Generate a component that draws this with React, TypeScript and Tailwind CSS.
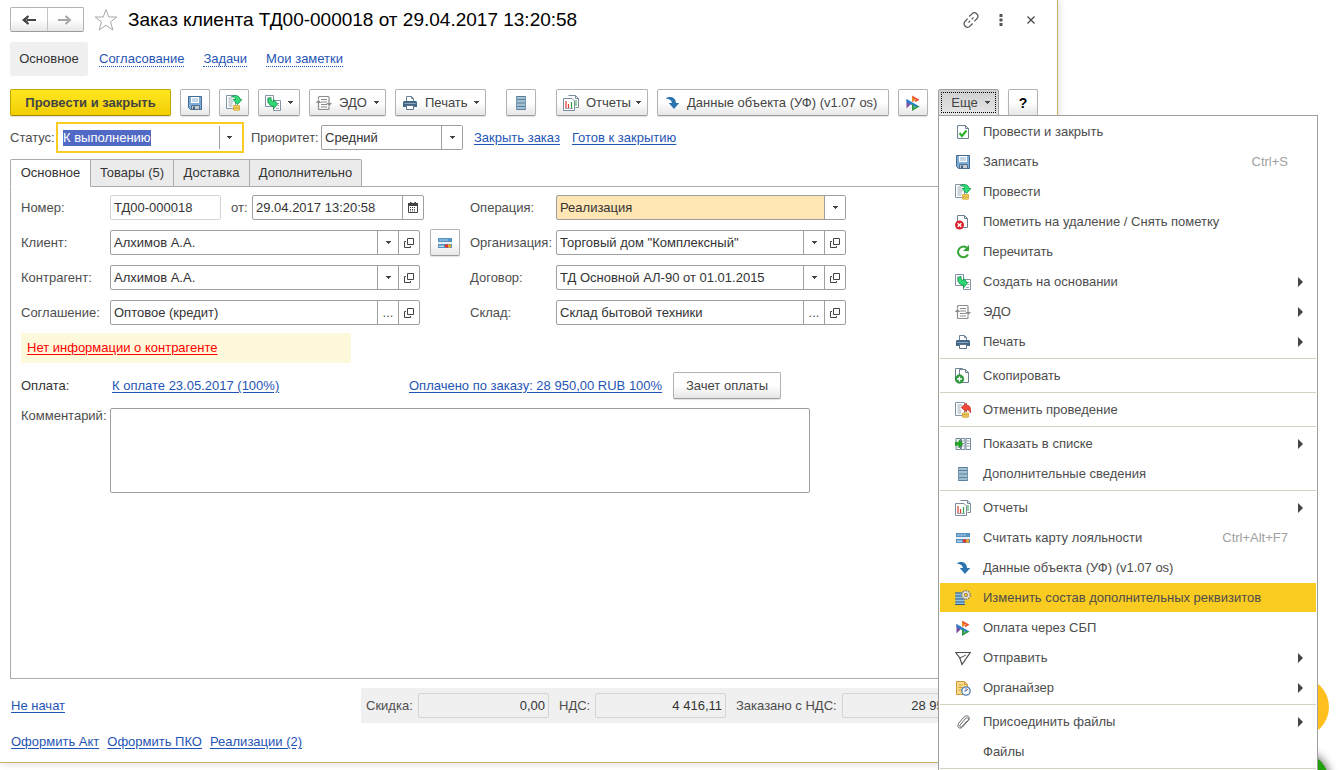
import { useEffect, useRef } from 'react';
import type { ReactNode } from 'react';
import clsx from 'clsx';

/* ---------- Icons ---------- */

type IconProps = { className?: string };

function Svg({ children, className = 'size-4', box = '0 0 16 16' }: { children: ReactNode; className?: string; box?: string }) {
    return (
        <svg viewBox={box} className={clsx('shrink-0', className)} fill="none" aria-hidden="true">
            {children}
        </svg>
    );
}

const Caret = () => (
    <Svg box="0 0 5 3" className="w-[5px] h-[3px]">
        <path d="M0 0h5v1H0zM1 1h3v1H1zM2 2h1v1H2z" fill="#444" />
    </Svg>
);

const OpenIcon = () => (
    <Svg box="0 0 10 10" className="size-[10px]">
        <path d="M3.500.5h6v6h-6zM2 3.500H.5v6h6V8" stroke="#444" />
    </Svg>
);

const CalendarIcon = () => (
    <Svg box="0 0 10 11" className="w-[10px] h-[11px]">
        <path d="M.5 2.500h9v8h-9z" stroke="#444" />
        <path d="M0 1h10v3H0zM2 0h1.500v2H2zM6.500 0H8v2H6.500z" fill="#444" />
        <path d="M2 5.500h6M2 7.500h6M2 9h6" stroke="#444" strokeDasharray="1 1" />
    </Svg>
);

const SaveIcon = () => (
    <Svg>
        <path d="M1.500 1.500h13v13h-11l-2-2z" fill="#7fadd9" stroke="#42698f" />
        <path d="M4 2h8v6H4z" fill="#fff" />
        <path d="M5 4h6M5 6h6" stroke="#8fb0d0" />
        <path d="M4.500 10.500h8v4h-8z" fill="#c9cdd2" stroke="#54708f" />
        <path d="M6 11.500h2v3H6z" fill="#40607f" />
    </Svg>
);

const PostIcon = () => (
    <Svg>
        <path d="M.5.5h9v13h-9z" fill="#fff" stroke="#8295a6" />
        <path d="M2.500 3h4M2.500 5h4M2.500 7h5M2.500 9h4M2.500 11h4" stroke="#9aa8b5" />
        <path d="M5.500 1.500C8.500-.5 14 .5 14 4.500h2L11.500 9.500 7 4.500h2.500C9.500 2.700 8 2 5.500 1.500z" fill="#2fdc78" stroke="#16924a" strokeWidth=".8" />
        <path d="M7.500 10.500h6V15c0 .6-6 .6-6 0z" fill="#f9df78" stroke="#d5a42e" strokeWidth=".8" />
        <path d="M7.500 12.200h6M7.500 13.800h6" stroke="#d09c2c" strokeWidth=".8" />
    </Svg>
);

const UnpostIcon = () => (
    <Svg>
        <path d="M.5.5h9v13h-9z" fill="#fff" stroke="#8295a6" />
        <path d="M2.500 3h5M2.500 5h3M2.500 7h3M2.500 9h4M2.500 11h4" stroke="#9aa8b5" />
        <path d="M6.200 5.500L11.500 1v2.200c3.500 0 4.600 2.500 4 7.800-1-2.500-2-3.300-4-3.300V10z" fill="#ee4a3c" stroke="#b92a20" strokeWidth=".7" />
        <path d="M7.500 11h6v4c0 .6-6 .6-6 0z" fill="#f9df78" stroke="#d5a42e" strokeWidth=".8" />
        <path d="M7.500 12.500h6M7.500 14h6" stroke="#d09c2c" strokeWidth=".8" />
    </Svg>
);

const CreateFromIcon = () => (
    <Svg>
        <path d="M.5.5h8v11h-8z" fill="#fff" stroke="#8295a6" />
        <path d="M2 3h2M2 5h1.500M2 7h1.500" stroke="#9aa8b5" />
        <path d="M8.500 5.500h7v10h-7z" fill="#fff" stroke="#8295a6" />
        <path d="M12 8.500h2M12.500 10.500h1.500M11 13.500h3" stroke="#9aa8b5" />
        <path d="M3 3.500l3-1.200c-.2 2.500.5 4 2.500 4.200V4.200L12.500 9l-4 5v-2.800C4.800 11 2.500 8.500 3 3.500z" fill="#2fd874" stroke="#16924a" strokeWidth=".8" />
    </Svg>
);

const EdoIcon = () => (
    <Svg>
        <path d="M2.500 4.500v-2c0-.6.400-1 1-1H12c.6 0 1 .4 1 1V8M13 11.500v2c0 .6-.4 1-1 1H3.500c-.6 0-1-.4-1-1V8" stroke="#8c8c8c" strokeWidth="1.200" />
        <path d="M5 4.500h6M5 7h6M5 9.500h6M5 12h6" stroke="#8c8c8c" />
        <path d="M-.3 8l2.800-3.200L5.300 8zM10.300 8h5.700l-2.900 3.200z" fill="#8c8c8c" />
    </Svg>
);

const PrintIcon = () => (
    <Svg>
        <path d="M4.500 6V1.500h5l2 2V6" fill="#fff" stroke="#6c8299" />
        <path d="M9.500 1.500v2h2" stroke="#6c8299" />
        <path d="M1 7.500C1 6.600 1.700 6 2.500 6h11c.8 0 1.500.6 1.500 1.500V12H1z" fill="#426788" />
        <path d="M2.500 8.500h11" stroke="#90aac2" />
        <path d="M4.500 10.500h7v4h-7z" fill="#fff" stroke="#5a748d" />
    </Svg>
);

const ListIcon = () => (
    <Svg>
        <path d="M3 1h10v14H3z" fill="#a3c0d2" />
        <path d="M3 1.500h10M3 4.500h10M3 8h10M3 11.500h10M3 14.500h10" stroke="#5d819c" />
        <path d="M3.500 1v14M12.500 1v14" stroke="#7395ad" />
    </Svg>
);

const ReportIcon = () => (
    <Svg>
        <path d="M5.500.5h7l3 3v9h-3" fill="#fff" stroke="#7c8c9c" />
        <path d="M12.500.5v3h3" stroke="#7c8c9c" />
        <path d="M13 5v6" stroke="#2fa34c" />
        <path d="M.5 3.500h8.500l2.500 2.500v9.500H.5z" fill="#fff" stroke="#7c8c9c" />
        <path d="M3 6v7M5.500 9v4" stroke="#e23b30" strokeWidth="1.200" />
        <path d="M8.500 7v6" stroke="#2fa34c" strokeWidth="1.200" />
        <path d="M2 13.500h8" stroke="#9aa8b5" />
    </Svg>
);

const ObjectDataIcon = () => (
    <Svg>
        <path d="M1.500 3.500C4.500.8 12 1.300 12 8h3.200L10 14 4.800 8h3C7.800 5.300 5.500 4 1.500 3.500z" fill="#2b74b0" />
    </Svg>
);

const SbpIcon = () => (
    <Svg>
        <path d="M1.500 4v9.500L6.500 8.500z" fill="#7b4fa0" />
        <path d="M1.500 4l13 7.500-3 1.200L1.500 7z" fill="#2b7fc9" />
        <path d="M7 .5v6.800l3-1.800V4.300z" fill="#f0882c" />
        <path d="M7 .5l7.500 4.200L10 7.300V5.500l1-.8-3-1.700z" fill="#e8502c" />
        <path d="M7 9.200V16l7.500-4.500-3-.5L9 12.800V10z" fill="#2c9a46" />
    </Svg>
);

const CardIcon = () => (
    <Svg>
        <path d="M1 3h14v10H1z" fill="#5794c6" />
        <path d="M2.500 5h9" stroke="#d7e8f5" strokeDasharray="2 1" />
        <path d="M1 7h14v2H1z" fill="#e9eef2" />
        <path d="M2 11.200h5" stroke="#e9eef2" />
        <path d="M8 9.500h3v3H8z" fill="#e5322d" />
        <path d="M11 9.500h3v3h-3z" fill="#f5a623" />
    </Svg>
);

const CheckDocIcon = () => (
    <Svg>
        <path d="M2.500 1.500h8l3 3v10h-11z" fill="#fff" stroke="#6f8294" />
        <path d="M10.500 1.500v3h3" stroke="#6f8294" />
        <path d="M4.500 9l2.500 3 4.500-5.500" stroke="#2cb52c" strokeWidth="2.200" />
    </Svg>
);

const DeleteMarkIcon = () => (
    <Svg>
        <path d="M2.500 1.500h7l3 3v9h-10z" fill="#fff" stroke="#6f8294" />
        <path d="M9.500 1.500v3h3" stroke="#6f8294" />
        <circle cx="4.500" cy="11" r="4.500" fill="#d9232e" />
        <path d="M2.700 9.200l3.600 3.600M6.300 9.200l-3.600 3.600" stroke="#fff" strokeWidth="1.400" />
    </Svg>
);

const RereadIcon = () => (
    <Svg>
        <path d="M13 10.500A5.300 5.300 0 1 1 11.500 3.600" stroke="#35a435" strokeWidth="2" />
        <path d="M14 1v6H8z" fill="#35a435" />
    </Svg>
);

const CopyDocIcon = () => (
    <Svg>
        <path d="M.5 12V.5h7l2 2" stroke="#6f8294" />
        <path d="M4.500 1.500h6l3 3v10h-9z" fill="#fff" stroke="#6f8294" />
        <path d="M10.500 1.500v3h3" stroke="#6f8294" />
        <circle cx="4.500" cy="11" r="4.300" fill="#2f9e3f" stroke="#1f7a2d" strokeWidth=".6" />
        <path d="M4.500 8.500v5M2 11h5" stroke="#fff" strokeWidth="1.300" />
    </Svg>
);

const ShowInListIcon = () => (
    <Svg>
        <path d="M.5 1.500h15v13H.5z" fill="#fff" />
        <path d="M1 2.500h4.500v11H1zM6.500 2.500h3.500v11H6.500zM11 2.500h4.500v11H11z" stroke="#74889b" />
        <path d="M7 5h2.500M7 7.500h2.500M7 10h2.500M12 5h2.500M12 7.500h2.500M12 10h2.500M2 11h3" stroke="#8b9cab" />
        <path d="M0 6.200h4V3.700l4 4-4 4V9.200H0z" fill="#1faa1f" stroke="#0d750d" strokeWidth=".5" />
    </Svg>
);

const EditPropsIcon = () => (
    <Svg>
        <path d="M.5 2.500h9v12h-9z" fill="#8fc3e6" />
        <path d="M0 3h9M0 6h9M0 9h10M0 12h10M0 14.500h10" stroke="#2e5878" />
        <circle cx="11" cy="5" r="4.300" fill="#e8e2d2" stroke="#8b8576" strokeDasharray="1.700 1" strokeWidth="1.400" />
        <circle cx="11" cy="5" r="1.700" fill="#facc20" stroke="#8b8576" />
    </Svg>
);

const SendIcon = () => (
    <Svg>
        <path d="M.8 2.500h14.400L7 14.500 4.800 8z" stroke="#4d4d4d" strokeWidth="1.200" />
        <path d="M4.800 8l6-2.800" stroke="#4d4d4d" />
    </Svg>
);

const OrganizerIcon = () => (
    <Svg>
        <path d="M1.500 1.500h8l3 3v10h-11z" fill="#fbdc8c" stroke="#d09a3c" />
        <path d="M9.500 1.500v3h3M3.500 5h4M3.500 7.500h4M3.500 10h3" stroke="#d09a3c" />
        <circle cx="11" cy="11" r="4.200" fill="#f4f9fd" stroke="#4d7fb0" strokeWidth="1.300" />
        <path d="M11 11l1.800-1.800" stroke="#d0342c" />
        <path d="M11 8v3H9.500" stroke="#4d7fb0" />
    </Svg>
);

const ClipIcon = ({ className }: IconProps) => (
    <Svg className={className}>
        <path
            d="M12.500 6.500l-5.300 5.800c-1.300 1.400-3.200.2-2.200-1.300L10.500 4.600c1.700-1.800 4.200 0 2.700 2M3.500 9.300L9.200 3c2.600-2.700 6.800-.3 4.300 3.300l-5.800 6.500c-2.600 2.900-6.300.4-4.200-2.800z"
            stroke="#666"
        />
    </Svg>
);

const StarIcon = () => (
    <Svg box="0 0 24 24" className="size-6">
        <path d="M12 1.500l2.800 7.500h8l-6.300 5 2.400 8-6.900-4.700L5.100 22l2.400-8L1.200 9h8z" stroke="#a8a8a8" />
    </Svg>
);

const LinkIcon = () => (
    <Svg>
        <path d="M6.300 4.500l2.700-2.700c2.900-2.900 8 1.200 5 4.700L11.300 9.300M9.700 11.500L7 14.200c-3 2.900-8-1.200-5-4.700l2.700-2.800M5.500 10.500l1.700-1.700M8.700 7.300l1.800-1.800" stroke="#555" strokeWidth="1.200" />
    </Svg>
);

/* ---------- Controls ---------- */

const buttonLook =
    'flex h-[27px] shrink-0 items-center rounded-[2px] border border-[#b3b3b3] border-b-[#9c9c9c] bg-linear-to-b from-white from-50% to-[#e6e6e6] text-[#444] shadow-[0_1px_1px_#0000001f]';

type ToolButtonProps = { width: string; label?: string; title?: string; icon?: ReactNode; menu?: boolean };

function ToolButton({ width, label, title, icon, menu }: ToolButtonProps) {
    const wide = !!icon && (!!label || menu);
    return (
        <button type="button" aria-label={label ?? title} className={clsx(buttonLook, width, wide ? 'px-[6px]' : 'justify-center')}>
            {icon}
            {label && <span className={clsx(wide && 'pl-[7px]')}>{label}</span>}
            {menu && <span className="ml-auto"><Caret /></span>}
        </button>
    );
}

const link = 'text-[#1f55b5] underline underline-offset-2';

type FieldProps = {
    id: string;
    value: string;
    width?: string;
    pick?: 'list' | 'dots' | 'date';
    open?: boolean;
};

function Field({ id, value, width = 'flex-1', pick = 'list', open = true }: FieldProps) {
    const side = 'flex w-[21px] shrink-0 items-center justify-center border-l border-[#9f9f9f]';
    return (
        <div className={clsx('flex h-[25px] rounded-[2px] border border-[#9f9f9f] bg-white', width)}>
            <input id={id} defaultValue={value} className="min-w-0 flex-1 px-[3px] text-[#333] outline-none" />
            <button type="button" aria-label="Выбрать" className={side}>
                {pick === 'list' && <Caret />}
                {pick === 'dots' && '...'}
                {pick === 'date' && <CalendarIcon />}
            </button>
            {open && (
                <button type="button" aria-label="Открыть" className={side}>
                    <OpenIcon />
                </button>
            )}
        </div>
    );
}

function Select({ id, value, width, className }: { id: string; value: string; width: string; className?: string }) {
    return (
        <div className={clsx('relative h-[25px] rounded-[2px] border border-[#9f9f9f]', width, className)}>
            <select id={id} className="size-full appearance-none px-[3px] text-[#333] outline-none">
                <option>{value}</option>
            </select>
            <span className="pointer-events-none absolute inset-y-0 right-0 flex w-[21px] items-center justify-center border-l border-[#9f9f9f] bg-white">
                <Caret />
            </span>
        </div>
    );
}

function Row({ id, label, labelWidth, children }: { id: string; label: string; labelWidth: string; children: ReactNode }) {
    return (
        <div className="flex h-[25px] items-center">
            <label htmlFor={id} className={clsx('shrink-0', labelWidth)}>{label}</label>
            {children}
        </div>
    );
}

function StatusBox() {
    const ref = useRef<HTMLInputElement>(null);

    useEffect(() => {
        ref.current?.focus();
        ref.current?.select();
    }, []);

    return (
        <div className="flex h-[31px] w-[188px] items-center border-2 border-[#facb20] bg-white">
            <input
                ref={ref}
                id="status"
                defaultValue="К выполнению"
                className="min-w-0 flex-1 pl-[5px] text-[#333] outline-none selection:bg-[#4f68c4fd] selection:text-white"
            />
            <button type="button" aria-label="Выбрать статус" className="flex h-[23px] w-[23px] items-center border-l border-[#9f9f9f] pl-[7px]">
                <Caret />
            </button>
        </div>
    );
}

/* ---------- Menu ---------- */

type MenuEntry = { text: string; icon?: ReactNode; keys?: string; sub?: boolean; active?: boolean };

const menuGroups: MenuEntry[][] = [
    [
        { text: 'Провести и закрыть', icon: <CheckDocIcon /> },
        { text: 'Записать', icon: <SaveIcon />, keys: 'Ctrl+S' },
        { text: 'Провести', icon: <PostIcon /> },
        { text: 'Пометить на удаление / Снять пометку', icon: <DeleteMarkIcon /> },
        { text: 'Перечитать', icon: <RereadIcon /> },
        { text: 'Создать на основании', icon: <CreateFromIcon />, sub: true },
        { text: 'ЭДО', icon: <EdoIcon />, sub: true },
        { text: 'Печать', icon: <PrintIcon />, sub: true },
    ],
    [{ text: 'Скопировать', icon: <CopyDocIcon /> }],
    [{ text: 'Отменить проведение', icon: <UnpostIcon /> }],
    [
        { text: 'Показать в списке', icon: <ShowInListIcon />, sub: true },
        { text: 'Дополнительные сведения', icon: <ListIcon /> },
    ],
    [
        { text: 'Отчеты', icon: <ReportIcon />, sub: true },
        { text: 'Считать карту лояльности', icon: <CardIcon />, keys: 'Ctrl+Alt+F7' },
        { text: 'Данные объекта (УФ) (v1.07 os)', icon: <ObjectDataIcon /> },
        { text: 'Изменить состав дополнительных реквизитов', icon: <EditPropsIcon />, active: true },
        { text: 'Оплата через СБП', icon: <SbpIcon /> },
        { text: 'Отправить', icon: <SendIcon />, sub: true },
        { text: 'Органайзер', icon: <OrganizerIcon />, sub: true },
    ],
    [
        { text: 'Присоединить файлы', icon: <ClipIcon />, sub: true },
        { text: 'Файлы' },
    ],
];

function MoreMenu() {
    return (
        <div role="menu" className="absolute top-[26px] left-0 z-20 flex w-[380px] flex-col gap-px border border-[#9f9f9f] bg-white px-px pt-px pb-10">
            {menuGroups.map((group, g) => (
                <div key={g} className="flex flex-col gap-px">
                    {group.map(item => (
                        <button
                            key={item.text}
                            type="button"
                            role="menuitem"
                            className={clsx('flex h-[29px] items-center gap-3 pr-[13px] pl-[15px] text-left text-[#4d4d4d]', item.active && 'bg-[#facb20]')}
                        >
                            <span className="size-4 shrink-0">{item.icon}</span>
                            <span className="flex-1">{item.text}</span>
                            {item.keys && <span className="pr-[15px] text-[#a0a0a0]">{item.keys}</span>}
                            {item.sub && (
                                <Svg box="0 0 5 10" className="h-[10px] w-[5px]">
                                    <path d="M0 0l5 5-5 5z" fill="#444" />
                                </Svg>
                            )}
                        </button>
                    ))}
                    <div role="separator" className="my-px h-px bg-[#d5d0bb]" />
                </div>
            ))}
        </div>
    );
}

/* ---------- Page ---------- */

const sections = ['Согласование', 'Задачи', 'Мои заметки'];

const tabs = [
    { text: 'Основное', width: 'w-[81px]', active: true },
    { text: 'Товары (5)', width: 'w-[83px]' },
    { text: 'Доставка', width: 'w-[76px]' },
    { text: 'Дополнительно', width: 'w-[112px]' },
];

const totals = [
    { id: 'discount', label: 'Скидка:', value: '0,00', labelWidth: 'w-[52px]' },
    { id: 'vat', label: 'НДС:', value: '4 416,11', labelWidth: 'w-[36px]' },
    { id: 'ordered', label: 'Заказано с НДС:', value: '28 950,00', labelWidth: 'w-[106px]' },
];

export default function App() {
    return (
        <div className="relative flex h-screen overflow-hidden bg-white pr-[286px] pb-[7px] font-['Liberation_Sans',Arial,sans-serif] text-[13px] leading-4 text-[#4d4d4d]">
            <main className="flex min-w-0 flex-1 flex-col border-r border-b border-[#c9b564] bg-white pr-[9px] pl-[10px] shadow-[0_0_8px_#0000002e]">
                {/* Title */}
                <header className="flex items-center pt-[7px] pr-[9px]">
                    <div className="flex h-[25px] w-[74px] rounded-[2px] border border-[#b3b3b3] border-b-[#9c9c9c] bg-linear-to-b from-white from-50% to-[#e6e6e6]">
                        <button type="button" aria-label="Назад" className="flex flex-1 items-center justify-center border-r border-[#c4c4c4]">
                            <Svg box="0 0 14 10" className="h-[10px] w-[14px]">
                                <path d="M14 5H5" stroke="#444" strokeWidth="2" />
                                <path d="M0 5l6-4.500V3L4 5l2 2v2.500z" fill="#444" />
                                <path d="M6.500 1L2 5l4.500 4" stroke="#444" strokeWidth="2" />
                            </Svg>
                        </button>
                        <button type="button" aria-label="Вперед" className="flex flex-1 items-center justify-center">
                            <Svg box="0 0 14 10" className="h-[10px] w-[14px]">
                                <path d="M0 5h10M7.500 1L12 5 7.500 9" stroke="#a6a6a6" strokeWidth="2" />
                            </Svg>
                        </button>
                    </div>
                    <button type="button" aria-label="В избранное" className="mr-[10px] ml-[10px]"><StarIcon /></button>
                    <h1 className="flex-1 text-[19px] leading-6 text-black">Заказ клиента ТД00-000018 от 29.04.2017 13:20:58</h1>
                    <div className="flex items-center gap-[14px]">
                        <button type="button" aria-label="Получить ссылку"><LinkIcon /></button>
                        <button type="button" aria-label="Меню окна">
                            <Svg><path d="M6.500 2h3v3h-3zM6.500 6.500h3v3h-3zM6.500 11h3v3h-3z" fill="#555" /></Svg>
                        </button>
                        <button type="button" aria-label="Закрыть">
                            <Svg><path d="M4.500 4.500l7 7M11.500 4.500l-7 7" stroke="#444" strokeWidth="1.200" /></Svg>
                        </button>
                    </div>
                </header>

                {/* Sections */}
                <nav className="mt-[10px] flex items-center gap-[19px]">
                    <span className="-mr-2 flex h-[34px] w-[78px] items-center justify-center rounded-[3px] bg-[#f0f0f0] text-[#333]">Основное</span>
                    {sections.map(text => (
                        <a key={text} href="#" className="border-b border-dotted border-[#1f55b5] text-[#1f55b5] leading-[14px]">{text}</a>
                    ))}
                </nav>

                {/* Commands */}
                <div className="mt-[13px] flex items-center gap-[9px] pr-[10px]">
                    <button type="button" className="h-[27px] w-[161px] shrink-0 rounded-[2px] border border-[#c2a600] border-b-[#a08a00] bg-linear-to-b from-[#ffe81f] to-[#f2cd00] font-bold text-[#444] shadow-[0_1px_1px_#0000001f]">
                        Провести и закрыть
                    </button>
                    <ToolButton width="w-[30px]" title="Записать" icon={<SaveIcon />} />
                    <ToolButton width="w-[30px]" title="Провести" icon={<PostIcon />} />
                    <ToolButton width="w-[42px]" title="Создать на основании" icon={<CreateFromIcon />} menu />
                    <ToolButton width="w-[77px]" label="ЭДО" icon={<EdoIcon />} menu />
                    <ToolButton width="w-[91px]" label="Печать" icon={<PrintIcon />} menu />
                    <div className="mx-[11px] flex">
                        <ToolButton width="w-[30px]" title="Дополнительные сведения" icon={<ListIcon />} />
                    </div>
                    <ToolButton width="w-[92px]" label="Отчеты" icon={<ReportIcon />} menu />
                    <ToolButton width="w-[232px]" label="Данные объекта (УФ) (v1.07 os)" icon={<ObjectDataIcon />} />
                    <ToolButton width="w-[30px]" title="Оплата через СБП" icon={<SbpIcon />} />
                    <div className="relative ml-auto">
                        <button type="button" aria-expanded="true" className="h-[27px] w-[61px] rounded-[2px] border border-[#9f9f9f] bg-linear-to-b from-[#cfcfcf] to-[#e6e6e6] p-[2px] text-[#444]">
                            <span className="flex size-full items-center justify-center gap-[7px] border border-dotted border-black pl-1">
                                Еще <Caret />
                            </span>
                        </button>
                        <MoreMenu />
                    </div>
                    <button type="button" className={clsx(buttonLook, 'w-[30px] justify-center text-sm font-bold text-black')}>?</button>
                </div>

                {/* Status */}
                <div className="mt-[6px] flex items-center">
                    <label htmlFor="status" className="w-[46px]">Статус:</label>
                    <StatusBox />
                    <label htmlFor="priority" className="ml-[7px] w-[70px]">Приоритет:</label>
                    <Select id="priority" value="Средний" width="w-[142px]" />
                    <a href="#" className={clsx(link, 'ml-[11px]')}>Закрыть заказ</a>
                    <a href="#" className={clsx(link, 'ml-3')}>Готов к закрытию</a>
                </div>

                {/* Tabs */}
                <div role="tablist" className="mt-[6px] flex">
                    {tabs.map(tab => (
                        <button
                            key={tab.text}
                            type="button"
                            role="tab"
                            aria-selected={!!tab.active}
                            className={clsx(
                                'relative -mb-px h-[28px] border border-[#ababab] text-[#333]',
                                tab.width,
                                tab.active ? 'rounded-tl-[2px] border-b-white bg-white' : 'border-l-0 bg-[#ebebeb] last:rounded-tr-[2px]',
                            )}
                        >
                            {tab.text}
                        </button>
                    ))}
                </div>

                <section className="flex-1 border border-[#ababab] px-[10px] pt-2">
                    <div className="flex">
                        <div className="flex w-[449px] flex-col gap-[10px]">
                            <Row id="number" label="Номер:" labelWidth="w-[89px]">
                                <input id="number" readOnly value="ТД00-000018" className="h-[25px] w-[111px] rounded-[2px] border border-[#d4d4d4] px-[3px] text-[#333] outline-none" />
                                <label htmlFor="date" className="w-[31px] pl-[10px]">от:</label>
                                <Field id="date" value="29.04.2017 13:20:58" width="w-[172px]" pick="date" open={false} />
                            </Row>
                            <Row id="client" label="Клиент:" labelWidth="w-[89px]">
                                <Field id="client" value="Алхимов А.А." width="w-[310px]" />
                                <div className="ml-[10px] flex">
                                    <ToolButton width="w-[30px]" title="Считать карту лояльности" icon={<CardIcon />} />
                                </div>
                            </Row>
                            <Row id="partner" label="Контрагент:" labelWidth="w-[89px]">
                                <Field id="partner" value="Алхимов А.А." width="w-[310px]" />
                            </Row>
                            <Row id="agreement" label="Соглашение:" labelWidth="w-[89px]">
                                <Field id="agreement" value="Оптовое (кредит)" width="w-[310px]" pick="dots" />
                            </Row>
                        </div>
                        <div className="flex w-[376px] flex-col gap-[10px]">
                            <Row id="operation" label="Операция:" labelWidth="w-[86px]">
                                <Select id="operation" value="Реализация" width="w-[290px]" className="bg-[#ffe6b3]" />
                            </Row>
                            <Row id="company" label="Организация:" labelWidth="w-[86px]">
                                <Field id="company" value={'Торговый дом "Комплексный"'} />
                            </Row>
                            <Row id="contract" label="Договор:" labelWidth="w-[86px]">
                                <Field id="contract" value="ТД Основной АЛ-90 от 01.01.2015" />
                            </Row>
                            <Row id="store" label="Склад:" labelWidth="w-[86px]">
                                <Field id="store" value="Склад бытовой техники" pick="dots" />
                            </Row>
                        </div>
                    </div>

                    <div className="mt-2 flex h-[30px] w-[330px] items-center bg-[#fff9db] pl-[6px]">
                        <a href="#" className="text-[#ff0000] underline underline-offset-2">Нет информации о контрагенте</a>
                    </div>

                    <div className="mt-[9px] flex items-center text-[#333]">
                        <span className="w-[91px]">Оплата:</span>
                        <a href="#" className={clsx(link, 'w-[297px]')}>К оплате 23.05.2017 (100%)</a>
                        <a href="#" className={clsx(link, 'w-[264px]')}>Оплачено по заказу: 28 950,00 RUB 100%</a>
                        <ToolButton width="w-[108px]" label="Зачет оплаты" />
                    </div>

                    <div className="mt-[9px] flex">
                        <label htmlFor="comment" className="w-[89px]">Комментарий:</label>
                        <textarea id="comment" className="h-[85px] w-[700px] resize-none rounded-[2px] border border-[#9f9f9f] outline-none" />
                    </div>
                </section>

                {/* Totals */}
                <div className="mt-[9px] flex items-center pl-px">
                    <div className="w-[350px]">
                        <a href="#" className={link}>Не начат</a>
                    </div>
                    <div className="flex h-[35px] flex-1 items-center gap-[10px] overflow-hidden bg-[#f0f0f0] pl-[5px]">
                        {totals.map(total => (
                            <div key={total.id} className="flex shrink-0 items-center">
                                <label htmlFor={total.id} className={total.labelWidth}>{total.label}</label>
                                <input id={total.id} readOnly value={total.value} className="h-[25px] w-[131px] rounded-[2px] border border-[#d4d4d4] px-[3px] text-right text-[#333] outline-none" />
                            </div>
                        ))}
                    </div>
                </div>

                <footer className="flex gap-2 pt-[11px] pb-3 pl-px">
                    <a href="#" className={link}>Оформить Акт</a>
                    <a href="#" className={link}>Оформить ПКО</a>
                    <a href="#" className={link}>Реализации (2)</a>
                </footer>
            </main>

            {/* Floating round badges at the edge of the window */}
            <div className="absolute right-[15px] bottom-[33px] size-[60px] rounded-full bg-[#ffbf1f]" />
            <div className="absolute right-[15px] -bottom-[42px] size-[60px] rounded-full bg-[#22a00c] shadow-[0_0_8px_2px_#00000080]" />
        </div>
    );
}
